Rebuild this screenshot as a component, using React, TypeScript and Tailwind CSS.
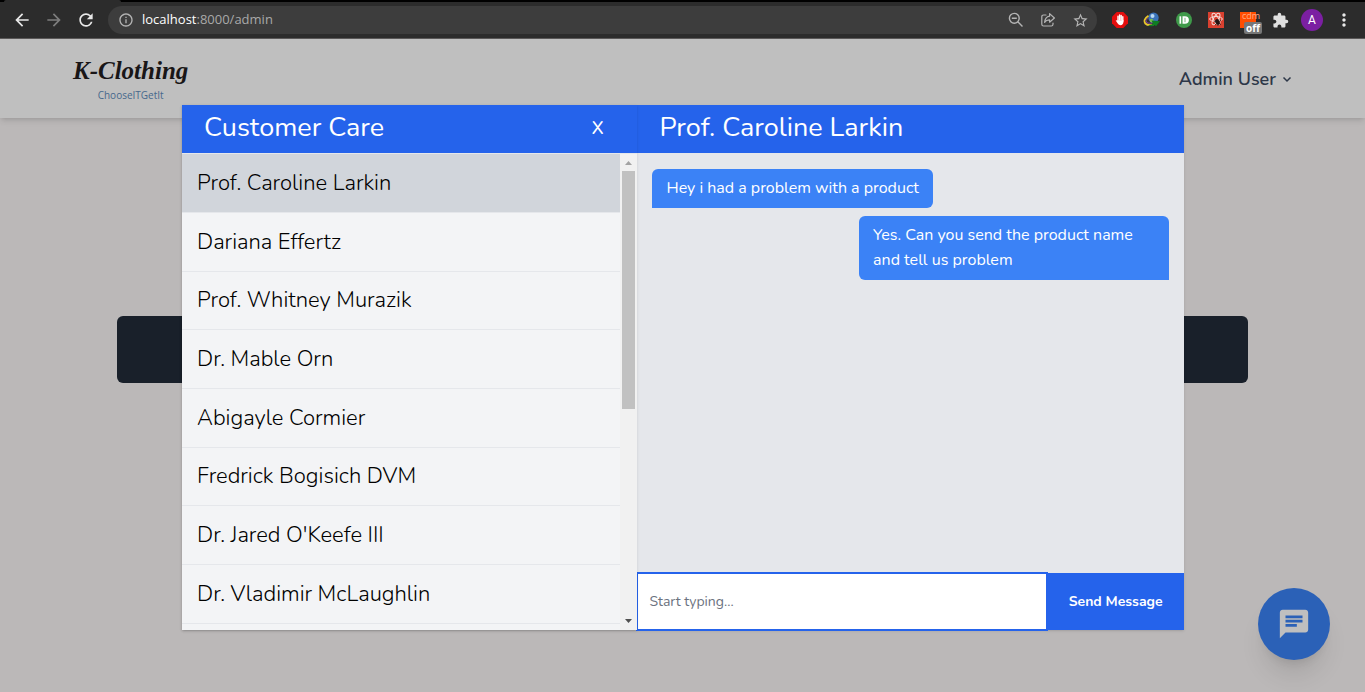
import { useState } from "react";
import type { ReactNode } from "react";
import {
  MdArrowBack,
  MdArrowForward,
  MdChat,
  MdExtension,
  MdInfoOutline,
  MdMoreVert,
  MdRefresh,
  MdStarBorder,
} from "react-icons/md";

const customers = [
  "Prof. Caroline Larkin",
  "Dariana Effertz",
  "Prof. Whitney Murazik",
  "Dr. Mable Orn",
  "Abigayle Cormier",
  "Fredrick Bogisich DVM",
  "Dr. Jared O'Keefe III",
  "Dr. Vladimir McLaughlin",
  "",
];

function BarButton({ label, children }: { label: string; children: ReactNode }) {
  return (
    <button type="button" aria-label={label} className="flex h-8 w-8 shrink-0 items-center justify-center">
      {children}
    </button>
  );
}

function ZoomOutIcon() {
  return (
    <svg width="16" height="16" viewBox="0 0 16 16" fill="none" stroke="#b4b4b4" strokeWidth="1.4">
      <circle cx="6.3" cy="6.3" r="4.9" />
      <path d="M3.800 6.300h5M9.800 9.800l4.700 4.700" />
    </svg>
  );
}

function ShareIcon() {
  return (
    <svg width="16" height="16" viewBox="0 0 16 16" fill="none" stroke="#b4b4b4" strokeWidth="1.2" strokeLinejoin="round">
      <path d="M6 3H3.6Q1.8 3 1.8 4.8v7.4Q1.8 14 3.6 14h7.6q1.8 0 1.8-1.8V11" strokeLinecap="round" />
      <path d="M9.6 1.6 14.4 6l-4.8 4.2V7.9Q6.2 7.8 4.6 10.4 5 5 9.6 4.2z" />
    </svg>
  );
}

function BlockerIcon() {
  return (
    <svg width="16" height="16" viewBox="0 0 16 16">
      <path d="M4.7 0h6.6L16 4.7v6.6L11.3 16H4.7L0 11.3V4.7z" fill="#e40d0d" />
      <g stroke="#fff" strokeWidth="1.4" strokeLinecap="round">
        <path d="M6 9V4.2M7.6 8V3M9.2 8V3.4M10.8 9V4.8" />
      </g>
      <path d="M5.3 8.2h6.2v1.6q-.3 3.4-3 3.4-1.8 0-2.8-1.6L3.7 8.600q.8-.8 1.600.1z" fill="#fff" />
    </svg>
  );
}

function DownloaderIcon() {
  return (
    <svg width="18" height="16" viewBox="0 0 17 16">
      <circle cx="10" cy="5.8" r="5.2" fill="#3a72b8" />
      <circle cx="9" cy="4" r="2" fill="#b9d8f2" />
      <path d="M6 7.500q3-2 4 1l-1.500 2.300Q6 10 6 7.500z" fill="#7bbf52" />
      <path d="M5 3.800Q-.8 7.500 1.800 11.500q2.500 2.500 8 1.300" fill="none" stroke="#e8c62c" strokeWidth="1.800" />
      <path d="M5 5.800q-3.800 2.600-2 4.600 1.800 1.400 6 .6" fill="none" stroke="#7d3fa0" strokeWidth="1" />
      <path d="M8 8.500l8.500.8-4 5-1.300-1.300Q8 15.500 4.500 13q3.500.5 5-1.500z" fill="#0f7d22" />
    </svg>
  );
}

function PushIcon() {
  return (
    <svg width="16" height="16" viewBox="0 0 16 16">
      <circle cx="8" cy="8" r="8" fill="#3f9a4a" />
      <path d="M3.500 4.300h1.700v7.400H3.500z" fill="#fff" />
      <path d="M6.500 4.300h2.400q4 .2 4 3.700t-4 3.700H6.500z" fill="#fff" />
      <path d="M9 5.800v4.400" stroke="#3f9a4a" strokeWidth=".7" />
    </svg>
  );
}

function ReactBugIcon() {
  return (
    <svg width="16" height="16" viewBox="0 0 16 16">
      <path d="M0 0h16v16H0z" fill="#d9402f" />
      <g fill="none" stroke="#f7dcd8" strokeWidth="1">
        <ellipse cx="8" cy="7" rx="6.300" ry="2.500" />
        <ellipse cx="8" cy="7" rx="6.300" ry="2.500" transform="rotate(60 8 7)" />
        <ellipse cx="8" cy="7" rx="6.300" ry="2.500" transform="rotate(120 8 7)" />
      </g>
      <ellipse cx="9.500" cy="10" rx="2" ry="3" fill="#231513" transform="rotate(-30 9.500 10)" />
      <path d="M6 9l7 3.500M7 13l6-5M10 7v7" stroke="#231513" strokeWidth=".8" />
    </svg>
  );
}

function BrowserBar() {
  return (
    <div className="bg-black font-['Open_Sans',sans-serif]">
      <div className="ml-1 h-0.5 w-[117px] rounded-t-sm bg-[#2c2c2c]" />
      <div className="flex h-[37px] items-center border-b border-[#5c5a5a] bg-[#2c2c2c] pr-[5px] pl-1.5">
        <BarButton label="Back">
          <MdArrowBack size={20} color="#e8e8e8" />
        </BarButton>
        <BarButton label="Forward">
          <MdArrowForward size={20} color="#7d7d7d" />
        </BarButton>
        <BarButton label="Reload">
          <MdRefresh size={20} color="#e8e8e8" />
        </BarButton>
        <div className="mr-[7px] ml-1.5 flex h-7 min-w-0 flex-1 items-center rounded-full bg-[#3d3d3d] pr-px pl-2.5">
          <MdInfoOutline size={16} color="#b4b4b4" />
          <span className="ml-2 flex-1 truncate text-[13px] text-[#a9a9a9]">
            <span className="text-white">localhost</span>:8000/admin
          </span>
          <BarButton label="Zoom">
            <ZoomOutIcon />
          </BarButton>
          <BarButton label="Share this page">
            <ShareIcon />
          </BarButton>
          <BarButton label="Bookmark this page">
            <MdStarBorder size={17} color="#b4b4b4" />
          </BarButton>
        </div>
        <BarButton label="Ad blocker">
          <BlockerIcon />
        </BarButton>
        <BarButton label="Download manager">
          <DownloaderIcon />
        </BarButton>
        <BarButton label="Push notifications">
          <PushIcon />
        </BarButton>
        <BarButton label="Developer tools">
          <ReactBugIcon />
        </BarButton>
        <BarButton label="Course tools, off">
          <span className="relative h-4 w-4 bg-[#ff4d00]">
            <span className="absolute top-0 left-0.5 text-[9px] leading-2 text-[#ffa880]">cdm</span>
            <span className="absolute top-2.5 left-1 rounded-xs bg-[#777] px-0.5 text-[10px] leading-3 font-bold text-white">
              off
            </span>
          </span>
        </BarButton>
        <BarButton label="Extensions">
          <MdExtension size={17} color="#e0e0e0" />
        </BarButton>
        <BarButton label="Profile">
          <span className="flex h-[22px] w-[22px] items-center justify-center rounded-full bg-[#7b1fa2] font-[Roboto,sans-serif] text-xs text-white">
            A
          </span>
        </BarButton>
        <BarButton label="Menu">
          <MdMoreVert size={20} color="#e8e8e8" />
        </BarButton>
      </div>
    </div>
  );
}

function SiteHeader() {
  return (
    <header className="flex h-[79px] items-center justify-between bg-[#bfbfbf] px-[73px] shadow-md">
      <a href="#home" className="flex flex-col items-center pt-1">
        <span className="font-['Liberation_Serif',serif] text-[25px] leading-7 font-bold text-[#191617] italic">
          K-Clothing
        </span>
        <span className="font-['Open_Sans',sans-serif] text-[10px] leading-5 text-[#46688c]">ChooseITGetIt</span>
      </a>
      <button type="button" className="flex items-center gap-1.5 text-lg font-semibold text-[#2d3748]">
        Admin User
        <svg width="10" height="10" viewBox="0 0 10 10" fill="none" stroke="#2d3748" strokeWidth="1.5">
          <path d="M1.500 3.500 5 7l3.500-3.500" />
        </svg>
      </button>
    </header>
  );
}

function ScrollBar() {
  return (
    <div aria-hidden="true" className="flex w-[17px] shrink-0 flex-col items-center bg-[#f1f1f1]">
      <svg width="17" height="17" viewBox="0 0 17 17" className="shrink-0">
        <path d="M5 11h7L8.500 7z" fill="#a3a3a3" />
      </svg>
      <div className="h-1/2 w-[13px] bg-[#c1c1c1]" />
      <svg width="17" height="17" viewBox="0 0 17 17" className="mt-auto shrink-0">
        <path d="M5 6h7l-3.500 4z" fill="#505050" />
      </svg>
    </div>
  );
}

function CustomerList({ selected, onSelect }: { selected: number; onSelect: (index: number) => void }) {
  return (
    <section className="relative z-10 flex min-w-0 flex-5 flex-col bg-[#f3f4f6] shadow">
      <div className="flex h-12 shrink-0 items-center justify-between bg-[#2563eb] pr-[34px] pb-0.5 pl-[22px] text-white">
        <h2 className="text-[27px] leading-9">Customer Care</h2>
        <button type="button" aria-label="Close" className="text-lg leading-9 font-medium">
          X
        </button>
      </div>
      <div className="flex min-h-0 flex-1 border-t border-[#e5e7eb]">
        <ul className="grid flex-1 auto-rows-[59px_59px_58px] content-start overflow-hidden">
          {customers.map((name, index) => (
            <li key={index} className="border-b border-[#e5e7eb]">
              <button
                type="button"
                onClick={() => onSelect(index)}
                className={
                  index === selected
                    ? "h-full w-full bg-[#d1d5db] px-[15px] text-left text-[22px] font-light text-black"
                    : "h-full w-full px-[15px] text-left text-[22px] font-light text-black"
                }
              >
                {name}
              </button>
            </li>
          ))}
        </ul>
        <ScrollBar />
      </div>
    </section>
  );
}

function Conversation({ title }: { title: string }) {
  return (
    <section className="flex min-w-0 flex-6 flex-col bg-[#e5e7eb]">
      <div className="flex h-12 shrink-0 items-center bg-[#2563eb] px-[22px] pb-0.5 text-white">
        <h2 className="text-[27px] leading-9">{title}</h2>
      </div>
      <div className="flex flex-1 flex-col gap-2 px-[15px] py-4 text-base leading-[25px] text-white">
        <p className="max-w-3/5 self-start rounded-md rounded-bl-none bg-[#3b82f6] px-3.5 py-[7px]">
          Hey i had a problem with a product
        </p>
        <p className="max-w-3/5 self-end rounded-md rounded-br-none bg-[#3b82f6] px-3.5 py-[7px]">
          Yes. Can you send the product name and tell us problem
        </p>
      </div>
      <form className="flex h-[57px] shrink-0" onSubmit={(event) => event.preventDefault()}>
        <input
          type="text"
          aria-label="Message"
          placeholder="Start typing..."
          className="relative w-3/4 border border-[#2563eb] bg-white px-[11px] text-sm outline outline-[#2563eb] placeholder:text-[#6b7280]"
        />
        <button type="submit" className="w-1/4 bg-[#2563eb] text-sm font-bold whitespace-nowrap text-white">
          Send Message
        </button>
      </form>
    </section>
  );
}

export default function App() {
  const [selected, setSelected] = useState(0);
  return (
    <div className="flex h-screen min-h-[600px] flex-col overflow-hidden bg-[#bbb8b8] font-['Nunito','Open_Sans',sans-serif]">
      <BrowserBar />
      <div className="relative flex-1">
        <SiteHeader />
        <main className="mx-[117px] mt-[198px] h-[67px] rounded-md bg-[#19202a]" />
        <div className="absolute inset-0 flex items-start pt-[66px] pr-[181px] pb-[62px] pl-[182px]">
          <div role="dialog" aria-label="Customer Care" className="flex h-full w-full shadow">
            <CustomerList selected={selected} onSelect={setSelected} />
            <Conversation title={customers[selected]} />
          </div>
        </div>
        <button
          type="button"
          aria-label="Open chat"
          className="absolute right-[35px] bottom-8 flex h-[72px] w-[72px] items-center justify-center rounded-full bg-[#2b61b7] shadow-xl"
        >
          <MdChat size={34} color="#bfbfbf" />
        </button>
      </div>
    </div>
  );
}
